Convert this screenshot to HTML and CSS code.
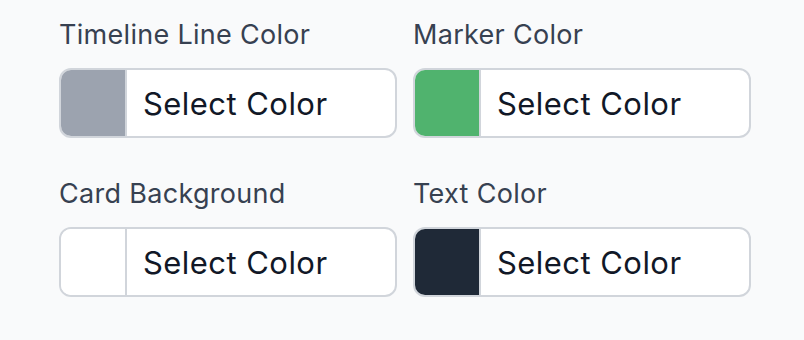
FILE: index.html
```html
<!DOCTYPE html>
<html>
<head>
<meta charset="utf-8">
<link rel="stylesheet" href="styles.css">
</head>
<body>
<div class="grid">
  <div class="field">
    <label class="label">Timeline Line Color</label>
    <div class="picker"><span class="swatch swatch-gray"></span><span class="picker-text">Select Color</span></div>
  </div>
  <div class="field">
    <label class="label">Marker Color</label>
    <div class="picker"><span class="swatch swatch-green"></span><span class="picker-text">Select Color</span></div>
  </div>
  <div class="field">
    <label class="label">Card Background</label>
    <div class="picker"><span class="swatch swatch-white"></span><span class="picker-text">Select Color</span></div>
  </div>
  <div class="field">
    <label class="label">Text Color</label>
    <div class="picker"><span class="swatch swatch-dark"></span><span class="picker-text">Select Color</span></div>
  </div>
</div>
</body>
</html>
```

FILE: styles.css
```css
html, body {
  margin: 0;
  padding: 0;
  background: #f9fafb;
  font-family: "Inter", "Noto Sans", sans-serif;
}
.grid {
  display: grid;
  grid-template-columns: 338px 338px;
  column-gap: 16px;
  row-gap: 40px;
  padding: 19px 0 0 59px;
}
.field {
  display: flex;
  flex-direction: column;
  gap: 17px;
}
.label {
  font-size: 27px;
  line-height: 32px;
  letter-spacing: 0.3px;
  color: #374151;
}
.picker {
  display: flex;
  height: 70px;
  box-sizing: border-box;
  border: 2px solid #d1d5db;
  border-radius: 12px;
  background: #ffffff;
  overflow: hidden;
}
.swatch {
  width: 64px;
  flex: none;
  border-right: 2px solid #d1d5db;
}
.swatch-gray { background: #9ca3af; }
.swatch-green { background: #50b36e; }
.swatch-white { background: #ffffff; }
.swatch-dark { background: #1f2937; }
.picker-text {
  display: flex;
  align-items: center;
  padding-left: 16px;
  font-size: 31px;
  letter-spacing: 0.45px;
  color: #111827;
}
```
